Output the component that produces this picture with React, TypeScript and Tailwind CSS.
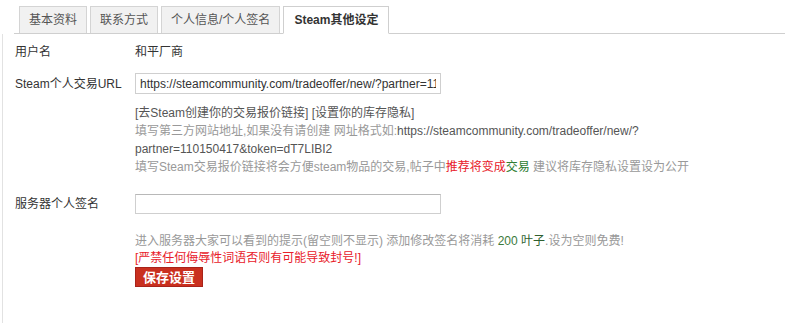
import { useState } from 'react';

const TABS = ['基本资料', '联系方式', '个人信息/个人签名', 'Steam其他设定'];

const FONT = "font-['Liberation_Sans','Noto_Sans_CJK_SC',sans-serif]";

export default function App() {
  const [active, setActive] = useState(3);
  const [tradeUrl, setTradeUrl] = useState(
    'https://steamcommunity.com/tradeoffer/new/?partner=110150417&token=dT7LIBI2'
  );
  const [signature, setSignature] = useState('');

  return (
    <div className={`h-[323px] w-[785px] overflow-hidden bg-white pl-[2px] text-[12px] text-[#333] ${FONT}`}>
      {/* tabs */}
      <div className="ml-[12px] flex gap-[3px] border-b border-[#cfcfcf] pl-[5px] pt-[6px]">
        {TABS.map((tab, i) => (
          <button
            key={tab}
            type="button"
            onClick={() => setActive(i)}
            className={
              i === active
                ? 'mb-[-1px] h-[28px] border border-b-white border-[#cfcfcf] bg-white px-[10px] font-bold text-[#333]'
                : 'h-[27px] border border-b-0 border-[#d4d4d4] bg-[#f1f1f1] px-[9px] text-[#555]'
            }
          >
            {tab}
          </button>
        ))}
      </div>

      <div className="h-[300px] border-l border-[#e2e2e2] pl-[12px] pt-[9px]">
        <div className="flex leading-[18px]">
          <div className="w-[120px]">用户名</div>
          <div>和平厂商</div>
        </div>

        <div className="mt-[12px] flex items-center">
          <div className="w-[120px]">Steam个人交易URL</div>
          <input
            value={tradeUrl}
            onChange={(e) => setTradeUrl(e.target.value)}
            className="h-[21px] w-[306px] border border-[#cfcfcf] px-[4px] text-[12px] text-[#333] outline-none"
          />
        </div>

        <div className="ml-[120px] mt-[10px] leading-[18px]">
          <div className="text-[#555]">[去Steam创建你的交易报价链接] [设置你的库存隐私]</div>
          <div className="text-[#999]">
            填写第三方网站地址,如果没有请创建 网址格式如:
            <span className="text-[#555]">https://steamcommunity.com/tradeoffer/new/?</span>
          </div>
          <div className="text-[#555]">partner=110150417&amp;token=dT7LIBI2</div>
          <div className="text-[#999]">
            填写Steam交易报价链接将会方便steam物品的交易,帖子中
            <span className="text-[#e8202a]">推荐将变成</span>
            <span className="text-[#2e7d32]">交易</span> 建议将库存隐私设置设为公开
          </div>
        </div>

        <div className="mt-[18px] flex items-center">
          <div className="w-[120px]">服务器个人签名</div>
          <input
            value={signature}
            onChange={(e) => setSignature(e.target.value)}
            className="h-[20px] w-[306px] border border-[#cfcfcf] border-t-[#b8b8b8] px-[4px] text-[12px] outline-none"
          />
        </div>

        <div className="ml-[120px] mt-[19px] leading-[17px]">
          <div className="text-[#999]">
            进入服务器大家可以看到的提示(留空则不显示) 添加修改签名将消耗{' '}
            <span className="text-[#3b7a3b]">200</span>{' '}
            <span className="text-[#2f5f2f]">叶子</span>.设为空则免费!
          </div>
          <div className="text-[#e8202a]">[严禁任何侮辱性词语否则有可能导致封号!]</div>
          <button
            type="button"
            className="h-[20px] w-[68px] border border-[#a8231a] bg-[#c9301f] text-[13px] font-bold text-white"
          >
            保存设置
          </button>
        </div>
      </div>
    </div>
  );
}
